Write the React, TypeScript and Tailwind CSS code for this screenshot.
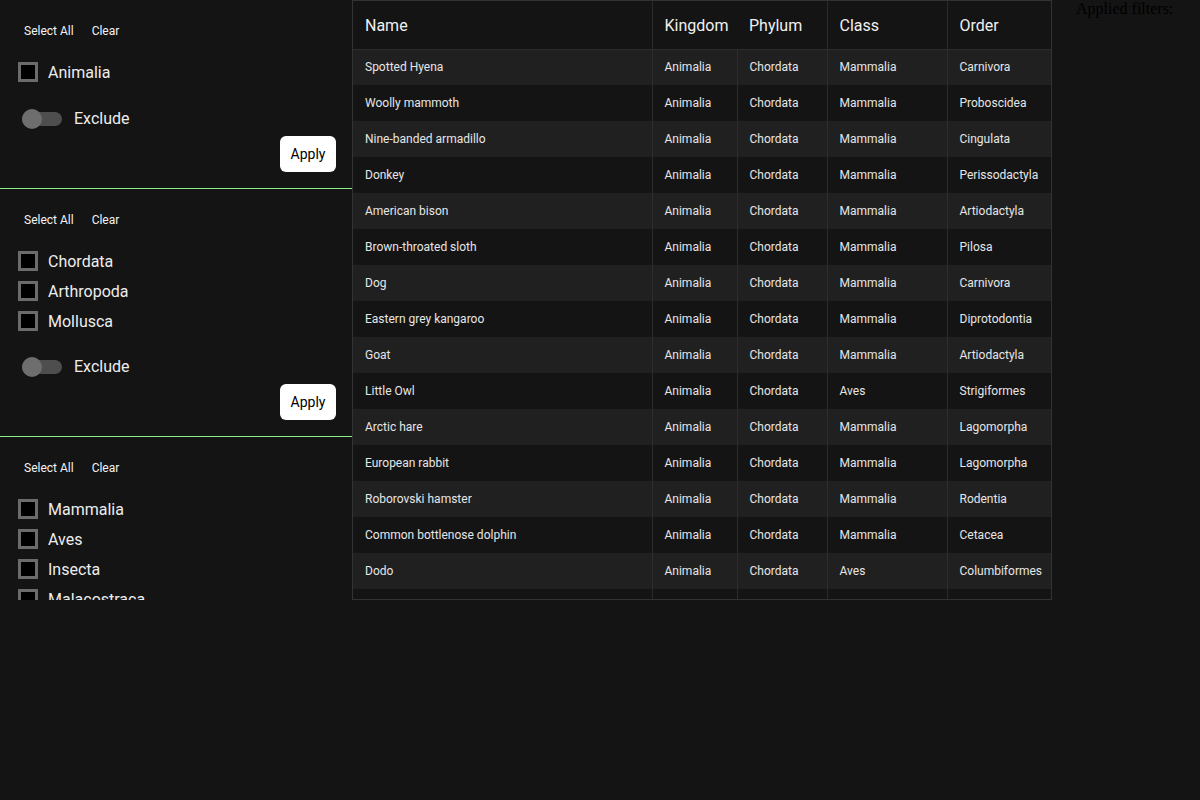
import React from 'react';

type Animal = {
  name: string;
  kingdom: string;
  phylum: string;
  cls: string;
  order: string;
};

const animals: Animal[] = [
  { name: 'Spotted Hyena', kingdom: 'Animalia', phylum: 'Chordata', cls: 'Mammalia', order: 'Carnivora' },
  { name: 'Woolly mammoth', kingdom: 'Animalia', phylum: 'Chordata', cls: 'Mammalia', order: 'Proboscidea' },
  { name: 'Nine-banded armadillo', kingdom: 'Animalia', phylum: 'Chordata', cls: 'Mammalia', order: 'Cingulata' },
  { name: 'Donkey', kingdom: 'Animalia', phylum: 'Chordata', cls: 'Mammalia', order: 'Perissodactyla' },
  { name: 'American bison', kingdom: 'Animalia', phylum: 'Chordata', cls: 'Mammalia', order: 'Artiodactyla' },
  { name: 'Brown-throated sloth', kingdom: 'Animalia', phylum: 'Chordata', cls: 'Mammalia', order: 'Pilosa' },
  { name: 'Dog', kingdom: 'Animalia', phylum: 'Chordata', cls: 'Mammalia', order: 'Carnivora' },
  { name: 'Eastern grey kangaroo', kingdom: 'Animalia', phylum: 'Chordata', cls: 'Mammalia', order: 'Diprotodontia' },
  { name: 'Goat', kingdom: 'Animalia', phylum: 'Chordata', cls: 'Mammalia', order: 'Artiodactyla' },
  { name: 'Little Owl', kingdom: 'Animalia', phylum: 'Chordata', cls: 'Aves', order: 'Strigiformes' },
  { name: 'Arctic hare', kingdom: 'Animalia', phylum: 'Chordata', cls: 'Mammalia', order: 'Lagomorpha' },
  { name: 'European rabbit', kingdom: 'Animalia', phylum: 'Chordata', cls: 'Mammalia', order: 'Lagomorpha' },
  { name: 'Roborovski hamster', kingdom: 'Animalia', phylum: 'Chordata', cls: 'Mammalia', order: 'Rodentia' },
  { name: 'Common bottlenose dolphin', kingdom: 'Animalia', phylum: 'Chordata', cls: 'Mammalia', order: 'Cetacea' },
  { name: 'Dodo', kingdom: 'Animalia', phylum: 'Chordata', cls: 'Aves', order: 'Columbiformes' },
  { name: 'Red fox', kingdom: 'Animalia', phylum: 'Chordata', cls: 'Mammalia', order: 'Carnivora' },
];

const FilterSection = ({ options }: { options: string[] }) => (
  <div className="border-b border-[#90ee90] pt-[19px] pr-4 pb-4 pl-[18px]">
    <div className="flex gap-1.5">
      <button className="h-6 px-1.5 text-xs text-[#f2f2f2]">Select All</button>
      <button className="h-6 px-1.5 text-xs text-[#f2f2f2]">Clear</button>
    </div>
    <div className="mt-[14px] flex flex-col">
      {options.map((opt) => (
        <label key={opt} className="flex h-[30px] items-center gap-2.5">
          <span className="h-5 w-5 border-[3px] border-[#6b6b6b] bg-black" />
          <span className="mt-0.5 text-base text-[#ededed]">{opt}</span>
        </label>
      ))}
    </div>
    <div className="mt-[16.5px] flex h-[30px] items-center gap-3 pl-1">
      <div className="relative h-5 w-10">
        <div className="absolute top-[3px] left-0 h-[14px] w-10 rounded-full bg-[#4e4e4e]" />
        <div className="absolute top-0 left-0 h-5 w-5 rounded-full bg-[#6e6e6e]" />
      </div>
      <span className="text-base text-[#ededed]">Exclude</span>
    </div>
    <div className="mt-0.5 flex justify-end">
      <button className="h-9 w-14 rounded-md bg-white text-sm text-black">Apply</button>
    </div>
  </div>
);

const App = () => {
  return (
    <div className="flex h-screen w-full bg-[#141414] font-['Roboto',sans-serif]">
      <aside className="h-[600px] w-[352px] shrink-0 overflow-hidden">
        <FilterSection options={['Animalia']} />
        <FilterSection options={['Chordata', 'Arthropoda', 'Mollusca']} />
        <FilterSection options={['Mammalia', 'Aves', 'Insecta', 'Malacostraca', 'Gastropoda']} />
      </aside>

      <div className="h-[600px] w-[700px] shrink-0 overflow-hidden border border-[#333]">
        <table className="w-[698px] table-fixed border-collapse text-left">
          <colgroup>
            <col className="w-[299px]" />
            <col className="w-[85px]" />
            <col className="w-[90px]" />
            <col className="w-[120px]" />
            <col className="w-[104px]" />
          </colgroup>
          <thead>
            <tr className="h-12 border-b border-[#2c2c2c] bg-[#141414] text-base text-[#f0f0f0]">
              <th className="border-r border-[#2c2c2c] px-3 pt-0.5 font-normal">Name</th>
              <th className="px-3 pt-0.5 font-normal">Kingdom</th>
              <th className="border-r border-[#2c2c2c] px-3 pt-0.5 font-normal">Phylum</th>
              <th className="border-r border-[#2c2c2c] px-3 pt-0.5 font-normal">Class</th>
              <th className="px-3 pt-0.5 font-normal">Order</th>
            </tr>
          </thead>
          <tbody>
            {animals.map((a, i) => (
              <tr
                key={a.name}
                className={`h-9 text-xs text-[#e6e6e6] ${i % 2 === 0 ? 'bg-[#202020]' : 'bg-[#141414]'}`}
              >
                <td className="border-r border-[#2c2c2c] px-3">{a.name}</td>
                <td className="border-r border-[#2c2c2c] px-3">{a.kingdom}</td>
                <td className="border-r border-[#2c2c2c] px-3">{a.phylum}</td>
                <td className="border-r border-[#2c2c2c] px-3">{a.cls}</td>
                <td className="px-3 whitespace-nowrap">{a.order}</td>
              </tr>
            ))}
          </tbody>
        </table>
      </div>

      <div className="ml-6 font-['Liberation_Serif',serif] text-base leading-[18px] text-black">Applied filters:</div>
    </div>
  );
};

export default App;
